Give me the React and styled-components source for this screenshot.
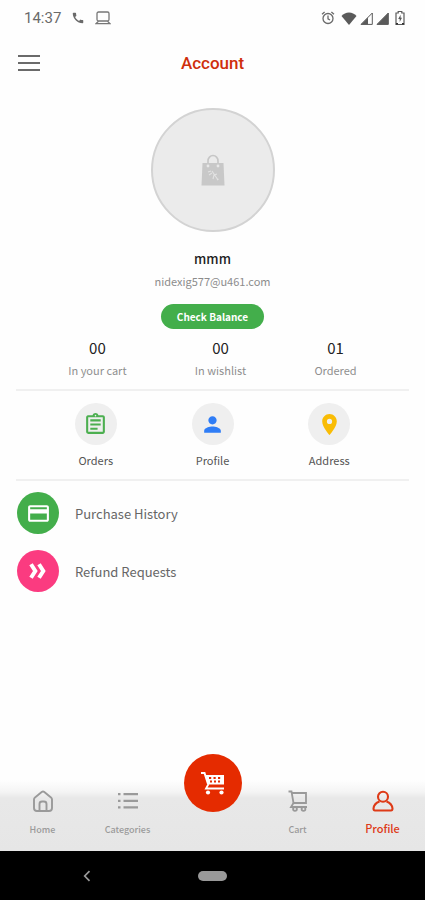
import React from 'react';
import styled, { createGlobalStyle } from 'styled-components';
import {
  MdCall,
  MdOutlineAssignment,
  MdPerson,
  MdLocationOn,
  MdPayment,
} from 'react-icons/md';

const GlobalStyle = createGlobalStyle`
  * {
    box-sizing: border-box;
  }

  body {
    margin: 0;
    background: #fefefe;
    font-family: "Noto Sans CJK SC", "Noto Sans", sans-serif;
  }

  button {
    padding: 0;
    border: 0;
    background: none;
    font-family: inherit;
  }

  a {
    color: inherit;
    text-decoration: none;
  }

  svg {
    display: block;
  }
`;

const Screen = styled.div`
  display: flex;
  flex-direction: column;
  min-height: 100vh;
`;

const StatusBar = styled.div`
  display: flex;
  align-items: center;
  justify-content: space-between;
  height: 36px;
  padding: 0 20px 0 24px;
  color: #6a6a6a;
  font-family: Roboto, sans-serif;
  font-size: 15px;
`;

const StatusGroup = styled.div`
  display: flex;
  align-items: center;
  gap: ${(props) => props.$gap};
`;

const Header = styled.header`
  display: grid;
  grid-template-columns: 24px 1fr 24px;
  align-items: center;
  height: 54px;
  padding: 0 18px;
`;

const MenuButton = styled.button`
  display: flex;
  flex-direction: column;
  gap: 5px;
  width: 22px;

  span {
    width: 100%;
    height: 2px;
    background: #6a6a6a;
  }
`;

const Title = styled.h1`
  margin: 0;
  color: #cf2f0c;
  font-family: Roboto, sans-serif;
  font-size: 17px;
  font-weight: 500;
  text-align: center;
`;

const Main = styled.main`
  flex: 1;
`;

const UserInfo = styled.section`
  display: flex;
  flex-direction: column;
  align-items: center;
  padding-top: 18px;
`;

const Avatar = styled.div`
  display: flex;
  align-items: center;
  justify-content: center;
  width: 124px;
  height: 124px;
  border: 2px solid #d3d3d3;
  border-radius: 50%;
  background: #ebebeb;
`;

const UserName = styled.div`
  margin-top: 16px;
  color: #222;
  font-size: 13px;
  font-weight: 500;
  line-height: 22px;
`;

const Email = styled.div`
  color: #8c8c8c;
  font-size: 11px;
  line-height: 22px;
`;

const BalanceButton = styled.button`
  height: 25px;
  margin-top: 12px;
  padding: 0 16px;
  border-radius: 13px;
  background: #43ae4b;
  color: #fff;
  font-size: 10px;
  font-weight: 700;
  line-height: 25px;
`;

const Row = styled.section`
  display: flex;
  justify-content: space-evenly;
  margin-top: ${(props) => props.$top};
`;

const Stat = styled.div`
  color: #8f8f8f;
  font-size: 11px;
  line-height: 22px;
  text-align: center;
`;

const StatValue = styled.div`
  color: #222;
  font-size: 15px;
  line-height: 22px;
`;

const Divider = styled.hr`
  height: 2px;
  margin: ${(props) => props.$top} 16px 0;
  border: 0;
  background: #f0f0f0;
`;

const Shortcut = styled.a`
  display: flex;
  flex-direction: column;
  align-items: center;
  width: 42px;
  color: #555;
  font-size: 11px;
  line-height: 18px;
`;

const Circle = styled.span`
  display: flex;
  flex-shrink: 0;
  align-items: center;
  justify-content: center;
  width: 42px;
  height: 42px;
  border-radius: 50%;
  background: ${(props) => props.$bg || '#efefef'};
  color: ${(props) => props.$color || '#fff'};
`;

const ShortcutLabel = styled.span`
  margin-top: 6px;
  white-space: nowrap;
`;

const List = styled.nav`
  display: flex;
  flex-direction: column;
  gap: 16px;
  padding: 11px 17px;
`;

const ListItem = styled.a`
  display: flex;
  align-items: center;
  gap: 16px;
  color: #666;
  font-size: 13px;
`;

const TabBar = styled.nav`
  display: grid;
  grid-template-columns: repeat(5, 1fr);
  height: 71px;
  background: linear-gradient(#fefefe, #f4f4f4 12px, #e8e8e8 18px, #e6e6e6);
`;

const Tab = styled.a`
  display: flex;
  flex-direction: column;
  align-items: center;
  gap: ${(props) => (props.$active ? '8px' : '10px')};
  padding-top: 10px;
  color: ${(props) => (props.$active ? '#de3a17' : '#9a9a9a')};
  font-size: ${(props) => (props.$active ? '11px' : '9px')};
  font-weight: 500;
  line-height: 16px;
`;

const CartButton = styled.button`
  display: flex;
  align-items: center;
  justify-content: center;
  justify-self: center;
  width: 58px;
  height: 58px;
  margin-top: -26px;
  border-radius: 50%;
  background: #e52b00;
`;

const SystemBar = styled.div`
  display: grid;
  grid-template-columns: 1fr auto 1fr;
  align-items: center;
  height: 49px;
  background: #000;
`;

const BackButton = styled.button`
  justify-self: center;
  margin-right: 24px;
`;

const HomePill = styled.button`
  width: 29px;
  height: 10px;
  border-radius: 5px;
  background: #999;
`;

const LaptopIcon = () => (
  <svg width="16" height="14" viewBox="0 0 16 14" fill="none" stroke="#777" strokeWidth="1.3">
    <rect x="2" y="1" width="12" height="9" rx="1.5" />
    <path d="M3.5 10.2L1 12.6h14l-2.5-2.4" />
  </svg>
);

const AlarmIcon = () => (
  <svg width="14" height="14" viewBox="0 0 14 14" fill="none" stroke="#6a6a6a" strokeWidth="1.3">
    <circle cx="7" cy="7.5" r="5" />
    <path d="M7 4.5v3.3l2 1.2M1 3.2L3.6 1M13 3.2L10.4 1" />
  </svg>
);

const WifiIcon = () => (
  <svg width="16" height="13" viewBox="0 0 16 13" fill="#5a5a5a">
    <path d="M8 13L0.5 4C2.5 1.8 5 0.6 8 0.6s5.5 1.2 7.5 3.4z" />
  </svg>
);

const SignalIcon = ({ full }) => (
  <svg width="13" height="13" viewBox="0 0 13 13">
    <path d="M12.3 1v11.4H1z" fill={full ? '#5a5a5a' : 'none'} stroke="#5a5a5a" strokeWidth="1" />
    {!full && <path d="M8 5.5v7H1z" fill="#5a5a5a" />}
  </svg>
);

const BatteryIcon = () => (
  <svg width="10" height="14" viewBox="0 0 10 14">
    <path d="M3.2 0.5h3.6v1.5H9v11.5H1V2h2.2z" fill="none" stroke="#5a5a5a" strokeWidth="1.2" />
    <path d="M5.6 3.8L3.2 8h1.5v3L7 6.8H5.6z" fill="#5a5a5a" />
    <path d="M1 12h2v1.5H1zM7 12h2v1.5H7z" fill="#333" />
  </svg>
);

const BagIcon = () => (
  <svg width="24" height="32" viewBox="0 0 24 32">
    <path d="M7 11V7a5 5.5 0 0 1 10 0v4" fill="none" stroke="#c6c6c6" strokeWidth="1.6" />
    <path d="M1.5 9h21l1 22.5H0.5z" fill="#c8c8c8" />
    <circle cx="7" cy="12" r="1.4" fill="#e8e8e8" />
    <circle cx="17" cy="12" r="1.4" fill="#e8e8e8" />
    <path
      d="M7 18l3-1M8 21l3-2M11 17l6 9M12 25l1-4 3-1M16 26l1.5-1"
      fill="none"
      stroke="#e2e2e2"
      strokeWidth="1.1"
    />
  </svg>
);

const DoubleChevronIcon = () => (
  <svg width="18" height="18" viewBox="0 0 18 18" fill="none" stroke="#fff" strokeWidth="4">
    <path d="M2 2.2L6.3 9 2 15.8" />
    <path d="M10 2.2L14.3 9 10 15.8" />
  </svg>
);

const HomeIcon = () => (
  <svg width="22" height="22" viewBox="0 0 22 22" fill="none" stroke="currentColor" strokeWidth="1.9">
    <path
      d="M2 9.5Q2 8.3 3 7.5L9.7 2Q11 1 12.3 2L19 7.5q1 .8 1 2v8.5q0 3-3 3H5q-3 0-3-3z"
      strokeLinejoin="round"
    />
    <path d="M7.5 21v-7q0-2.5 2.5-2.5h2q2.5 0 2.5 2.5v7" />
  </svg>
);

const ListIcon = () => (
  <svg width="22" height="22" viewBox="0 0 22 22" fill="currentColor">
    <path d="M1 3h2.5v2.2H1zM6.5 3H21v2.2H6.5zM1 9.7h2.5v2.2H1zM6.5 9.7H21v2.2H6.5zM1 16.3h2.5v2.2H1zM6.5 16.3H21v2.2H6.5z" />
  </svg>
);

const CartIcon = () => (
  <svg width="22" height="22" viewBox="0 0 22 22" fill="none" stroke="currentColor" strokeWidth="1.8">
    <path d="M1.5 1.5H4.5L6.5 13H19V3H5" />
    <path d="M6.5 13L4 17h16" />
    <circle cx="8" cy="19" r="1.9" />
    <circle cx="16.5" cy="19" r="1.9" />
  </svg>
);

const FilledCartIcon = () => (
  <svg width="26" height="26" viewBox="0 0 26 26" fill="none" stroke="#fff" strokeWidth="2">
    <path d="M1 3h3.5L8 14" />
    <path d="M5.500 5h18.500v9.500H8z" fill="#fff" stroke="none" />
    <path
      d="M9 8h2.200M13.500 8h2.200M18 8h2.200M10 11.500h2M14 11.500h2M18 11.500h2"
      stroke="#e52b00"
      strokeWidth="2"
    />
    <path d="M8.500 14L6 18.500h18" strokeWidth="1.8" />
    <circle cx="8" cy="22.5" r="2.1" fill="#fff" stroke="none" />
    <circle cx="21.5" cy="22.5" r="2.1" fill="#fff" stroke="none" />
  </svg>
);

const UserIcon = () => (
  <svg width="22" height="22" viewBox="0 0 22 22" fill="none" stroke="currentColor" strokeWidth="2.1">
    <circle cx="11" cy="6.8" r="5" />
    <path d="M7.5 11.5Q2 13.5 1.5 18.5q0 2 1.5 2h16q1.5 0 1.5-2-.5-5-6-7" />
  </svg>
);

const stats = [
  { value: '00', label: 'In your cart' },
  { value: '00', label: 'In wishlist' },
  { value: '01', label: 'Ordered' },
];

const shortcuts = [
  { label: 'Orders', color: '#4caf50', icon: <MdOutlineAssignment size={25} /> },
  { label: 'Profile', color: '#2f7df6', icon: <MdPerson size={25} /> },
  { label: 'Address', color: '#f9bc05', icon: <MdLocationOn size={25} /> },
];

const App = () => {
  return (
    <Screen>
      <GlobalStyle />
      <StatusBar>
        <StatusGroup $gap="10px">
          <span>14:37</span>
          <MdCall size={14} />
          <LaptopIcon />
        </StatusGroup>
        <StatusGroup $gap="3px">
          <AlarmIcon />
          <span />
          <WifiIcon />
          <SignalIcon />
          <SignalIcon full />
          <span />
          <BatteryIcon />
        </StatusGroup>
      </StatusBar>

      <Header>
        <MenuButton aria-label="Menu">
          <span />
          <span />
          <span />
        </MenuButton>
        <Title>Account</Title>
      </Header>

      <Main>
        <UserInfo>
          <Avatar>
            <BagIcon />
          </Avatar>
          <UserName>mmm</UserName>
          <Email>nidexig577@u461.com</Email>
          <BalanceButton>Check Balance</BalanceButton>
        </UserInfo>

        <Row $top="8px">
          {stats.map((stat) => (
            <Stat key={stat.label}>
              <StatValue>{stat.value}</StatValue>
              {stat.label}
            </Stat>
          ))}
        </Row>
        <Divider $top="8px" />

        <Row $top="12px">
          {shortcuts.map((item) => (
            <Shortcut key={item.label} href="#">
              <Circle $color={item.color}>{item.icon}</Circle>
              <ShortcutLabel>{item.label}</ShortcutLabel>
            </Shortcut>
          ))}
        </Row>
        <Divider $top="10px" />

        <List>
          <ListItem href="#">
            <Circle $bg="#43ae4b">
              <MdPayment size={25} />
            </Circle>
            Purchase History
          </ListItem>
          <ListItem href="#">
            <Circle $bg="#fb3b80">
              <DoubleChevronIcon />
            </Circle>
            Refund Requests
          </ListItem>
        </List>
      </Main>

      <TabBar>
        <Tab href="#">
          <HomeIcon />
          Home
        </Tab>
        <Tab href="#">
          <ListIcon />
          Categories
        </Tab>
        <CartButton aria-label="Shop">
          <FilledCartIcon />
        </CartButton>
        <Tab href="#">
          <CartIcon />
          Cart
        </Tab>
        <Tab href="#" $active>
          <UserIcon />
          Profile
        </Tab>
      </TabBar>

      <SystemBar>
        <BackButton aria-label="Back">
          <svg width="8" height="12" viewBox="0 0 8 12" fill="none" stroke="#999" strokeWidth="1.7">
            <path d="M6.5 1.2L1.7 6l4.8 4.8" />
          </svg>
        </BackButton>
        <HomePill aria-label="Home" />
        <span />
      </SystemBar>
    </Screen>
  );
};

export default App;
